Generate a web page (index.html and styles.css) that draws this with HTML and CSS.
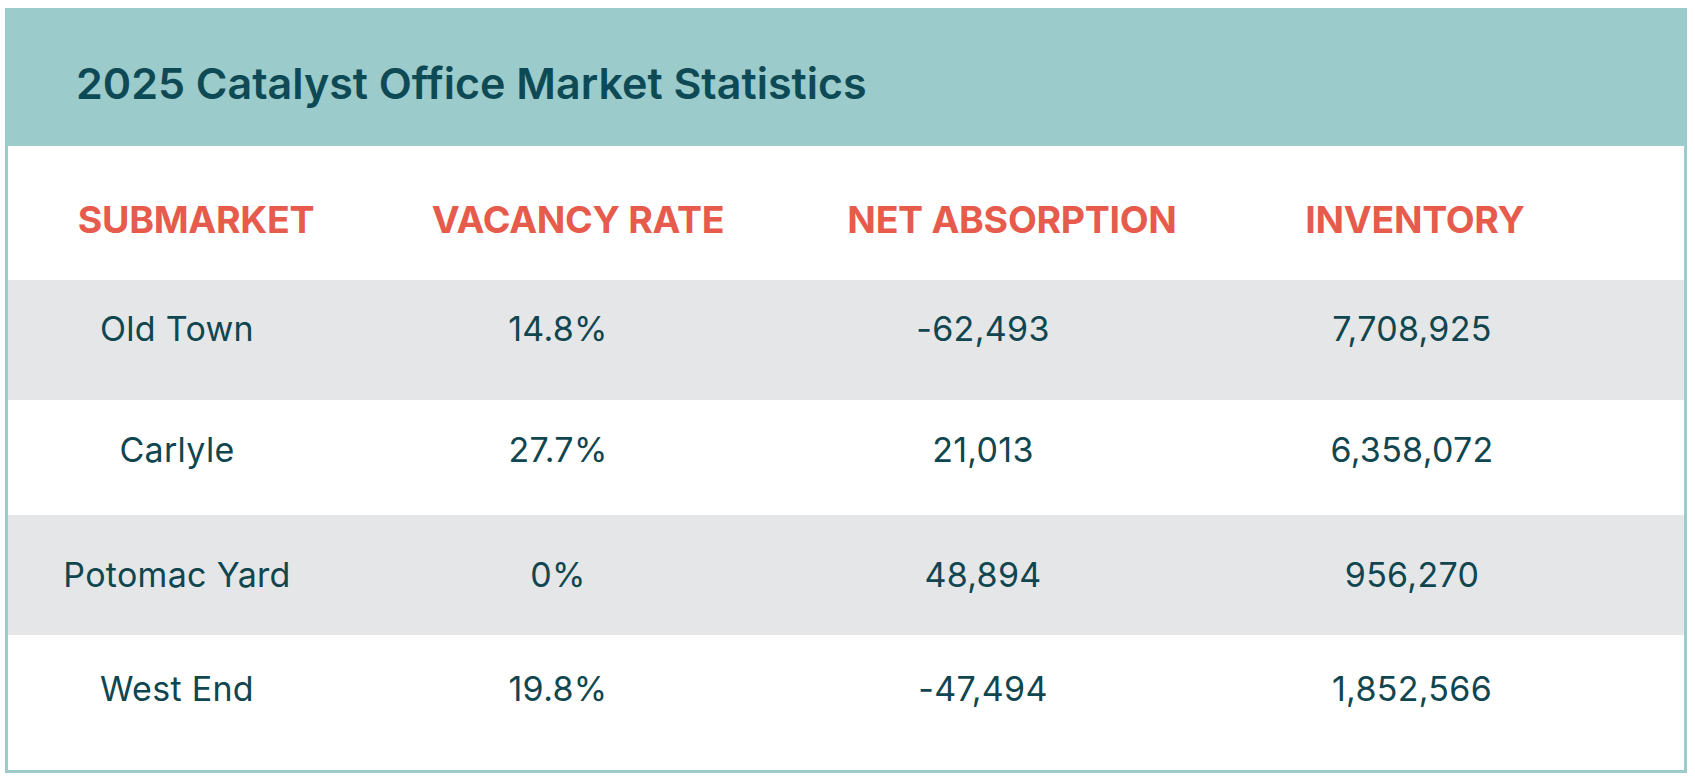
FILE: index.html
```html
<!DOCTYPE html>
<html lang="en">
<head>
<meta charset="utf-8">
<title>2025 Catalyst Office Market Statistics</title>
<link rel="stylesheet" href="styles.css">
</head>
<body>
<div class="card">
  <header class="card-head">
    <h1 class="title">2025 Catalyst Office Market Statistics</h1>
  </header>
  <div class="table">
    <div class="row row-head">
      <div class="cell">SUBMARKET</div>
      <div class="cell">VACANCY RATE</div>
      <div class="cell">NET ABSORPTION</div>
      <div class="cell">INVENTORY</div>
    </div>
    <div class="row row-data row-1 alt">
      <div class="cell">Old Town</div>
      <div class="cell">14.8%</div>
      <div class="cell">-62,493</div>
      <div class="cell">7,708,925</div>
    </div>
    <div class="row row-data row-2">
      <div class="cell">Carlyle</div>
      <div class="cell">27.7%</div>
      <div class="cell">21,013</div>
      <div class="cell">6,358,072</div>
    </div>
    <div class="row row-data row-3 alt">
      <div class="cell">Potomac Yard</div>
      <div class="cell">0%</div>
      <div class="cell">48,894</div>
      <div class="cell">956,270</div>
    </div>
    <div class="row row-data row-4">
      <div class="cell">West End</div>
      <div class="cell">19.8%</div>
      <div class="cell">-47,494</div>
      <div class="cell">1,852,566</div>
    </div>
  </div>
</div>
</body>
</html>
```

FILE: styles.css
```css
* { box-sizing: border-box; }

html, body {
  margin: 0;
  padding: 0;
  background: #ffffff;
}

body {
  padding: 8px 0 0 5px;
  font-family: Inter, "Liberation Sans", sans-serif;
  color: #10464f;
}

.card {
  width: 1682px;
  height: 765px;
  border: 3px solid #9ccbcb;
  background: #ffffff;
  display: flex;
  flex-direction: column;
}

.card-head {
  height: 135px;
  background: #9ccbcb;
  display: flex;
  align-items: center;
  padding: 8px 0 0 68px;
}

.title {
  margin: 0;
  font-size: 43px;
  font-weight: 600;
  letter-spacing: 0;
  color: #0e4a55;
}

.table {
  flex: 1;
  display: flex;
  flex-direction: column;
}

.row {
  display: grid;
  align-items: center;
}

.row-head {
  height: 134px;
  grid-template-columns: 376px 388px 480px 326px 1fr;
  padding-top: 12px;
  color: #e65b4b;
  font-size: 37.5px;
  font-weight: 700;
  letter-spacing: -0.3px;
}

.row-data {
  grid-template-columns: 338px 424px 426px 432px 1fr;
  font-size: 34px;
  font-weight: 400;
  letter-spacing: 0.3px;
  color: #10464f;
}

.cell {
  text-align: center;
  white-space: nowrap;
}

.alt { background: #e4e6e7; }

.row-1 { height: 120px; padding-bottom: 24px; }
.row-2 { height: 115px; padding-bottom: 16px; }
.row-3 { height: 120px; padding-bottom: 2px; }
.row-4 { flex: 1; padding-bottom: 28px; }
```
